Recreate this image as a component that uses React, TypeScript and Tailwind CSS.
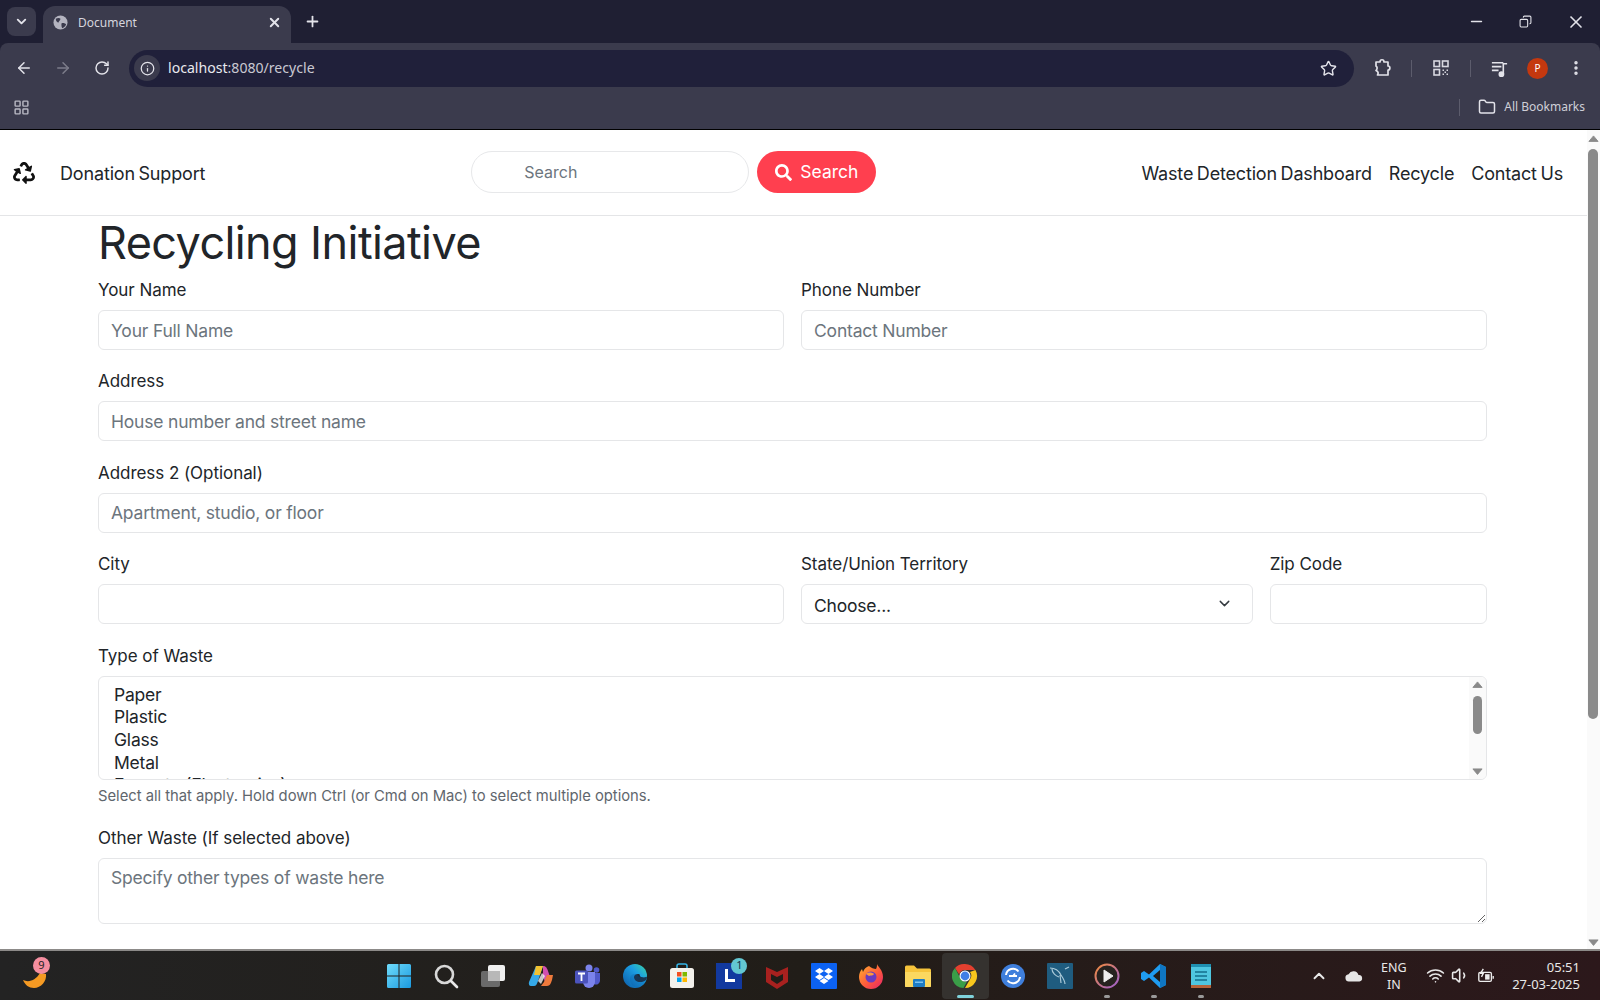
import {
  ArrowLeft,
  ArrowRight,
  ChevronDown,
  ChevronUp,
  Copy,
  EllipsisVertical,
  Folder,
  Info,
  LayoutGrid,
  Minus,
  Plus,
  RotateCw,
  Star,
  Volume1,
  Wifi,
  X,
} from "lucide-react";
import { FaRecycle, FaSearch } from "react-icons/fa";

const sans = "font-['Inter','Liberation_Sans',sans-serif]";
const inputClass =
  "h-10 w-full rounded-md border border-[#e5e6e8] bg-white px-[12px] text-[17.5px] tracking-[-0.2px] text-[#212529] outline-none placeholder:text-[#6c757d]";
const labelClass = "mb-[9px] block h-6 text-[17px] leading-[26px] tracking-[-0.05px] text-[#212529]";

const wasteTypes = ["Paper", "Plastic", "Glass", "Metal", "E-waste (Electronics)"];

function Triangle({ down, className }: { down?: boolean; className?: string }) {
  return (
    <svg viewBox="0 0 12 8" className={className} fill="#8a8a8a">
      <path d={down ? "M1 1h10L6 7z" : "M1 7h10L6 1z"} strokeLinejoin="round" stroke="#8a8a8a" />
    </svg>
  );
}

function TabGlobe() {
  return (
    <svg viewBox="0 0 16 16" className="ml-[1px] h-[15px] w-[15px]">
      <circle cx="8" cy="8" r="7.500" fill="#b4b4c0" />
      <path d="M3 4c2-1 4-1 5 0 0 2-2 2-2 4-2 0-3-2-3-4zM9 9c2-1 4 0 5 1-1 2-2 3-4 4-1-1-1-3-1-5z" fill="#3b3b4d" />
    </svg>
  );
}

function ExtensionsIcon() {
  return (
    <svg viewBox="0 0 20 20" className="ml-[19px] h-[20px] w-[20px]" fill="none" stroke="#e3e3ea" strokeWidth="1.700" strokeLinejoin="round">
      <path d="M3 4h4c0-3 4-3 4 0h4v4c2.500 0 2.500 4 0 4v5H4.500c1-1.500 1-3.500-1.500-4.500 1.500-1.500 1.500-3.500 0-4.500z" />
    </svg>
  );
}

function QrIcon() {
  return (
    <svg viewBox="0 0 18 18" className="ml-[20px] h-[18px] w-[18px]" fill="none" stroke="#d8d8e0" strokeWidth="1.600">
      <rect x="2" y="2" width="5.500" height="5.500" />
      <rect x="10.500" y="2" width="5.500" height="5.500" />
      <rect x="2" y="10.500" width="5.500" height="5.500" />
      <path d="M10.500 10.500h1.500v1.500h-1.500zM14.500 10.500H16V12h-1.500zM12.500 12.500H14V14h-1.500zM10.500 14.500H12V16h-1.500zM14.500 14.500H16V16h-1.500z" fill="#d8d8e0" stroke="none" />
    </svg>
  );
}

function MediaIcon() {
  return (
    <svg viewBox="0 0 20 20" className="ml-[19px] h-[19px] w-[19px]" fill="none" stroke="#e3e3ea" strokeWidth="1.700">
      <path d="M2 4h12M2 8h10M2 12h7" />
      <path d="M14 16V5h4" />
      <circle cx="12" cy="16" r="2.200" fill="#e3e3ea" />
    </svg>
  );
}

function BrowserChrome() {
  return (
    <div className="bg-[#1f1f33] font-['Noto_Sans',sans-serif] text-[#e3e3ea]">
      <div className="flex h-[43px] items-end">
        <div className="mb-[7px] ml-[7px] flex h-[29px] w-[29px] items-center justify-center rounded-lg bg-[#3b3b4d]">
          <ChevronDown size={15} strokeWidth={3} />
        </div>
        <div className="ml-[7px] flex h-[37px] w-[248px] items-center rounded-t-xl bg-[#3b3b4d] pb-[4px] pl-[9px]">
          <TabGlobe />
          <span className="ml-[10px] text-[12px] text-[#d5d5dd]">Document</span>
          <X size={15} strokeWidth={3} className="ml-auto mr-[9px]" />
        </div>
        <Plus size={17} strokeWidth={2.5} className="mb-[13px] ml-[13px]" />
        <Minus size={17} strokeWidth={2} className="mb-[13px] ml-auto" />
        <Copy size={13} strokeWidth={2} className="mb-[15px] ml-[34px] -scale-x-100" />
        <X size={20} strokeWidth={2} className="mb-[11px] ml-[34px] mr-[14px]" />
      </div>
      <div className="h-[86px] rounded-t-lg bg-[#3b3b4d]">
        <div className="flex h-[50px] items-center pl-[4px]">
          <div className="flex w-[39px] justify-center"><ArrowLeft size={18} /></div>
          <div className="flex w-[39px] justify-center"><ArrowRight size={18} className="text-[#7c7c8a]" /></div>
          <div className="flex w-[39px] justify-center"><RotateCw size={16} strokeWidth={2.2} /></div>
          <div className="ml-[8px] flex h-[37px] w-[1225px] items-center rounded-full bg-[#20203a] pl-[5px]">
            <div className="flex h-[26px] w-[26px] items-center justify-center rounded-full bg-[#3b3b4d]">
              <Info size={15} />
            </div>
            <span className="ml-[8px] text-[14.1px] text-[#e9e9ee]">
              localhost<span className="text-[#c9c9d2]">:8080/recycle</span>
            </span>
            <Star size={17} strokeWidth={2} className="ml-auto mr-[17px]" />
          </div>
          <ExtensionsIcon />
          <div className="ml-[18px] h-[17px] w-px bg-[#5c5c6c]" />
          <QrIcon />
          <div className="ml-[20px] h-[17px] w-px bg-[#5c5c6c]" />
          <MediaIcon />
          <div className="ml-[18px] flex h-[21px] w-[21px] items-center justify-center rounded-full bg-[#c4380f] text-[10px] text-white">
            P
          </div>
          <EllipsisVertical size={18} strokeWidth={2.6} className="ml-[19px]" />
        </div>
        <div className="flex h-[28px] items-center pl-[13px]">
          <LayoutGrid size={17} className="text-[#b9b9c4]" />
          <div className="ml-auto h-[17px] w-px bg-[#5c5c6c]" />
          <Folder size={18} className="ml-[18px]" />
          <span className="ml-[8px] mr-[15px] text-[12px] text-[#cfcfd8]">All Bookmarks</span>
        </div>
      </div>
      <div className="h-px bg-black" />
    </div>
  );
}

function Navbar() {
  return (
    <nav className="flex h-[86px] items-center border-b border-[#e4e5e7] pl-[13px] pr-[24px]">
      <FaRecycle size={22} className="text-[#111]" />
      <span className="ml-[25px] mt-[2px] text-[18px] tracking-[-0.15px] text-[#212529] [word-spacing:-1.5px]">Donation Support</span>
      <div className="ml-[266px] flex items-center gap-2">
        <input
          placeholder="Search"
          className="mb-[1px] h-[42px] w-[278px] rounded-full border border-[#e7e8ea] pl-[52px] text-[16px] outline-none placeholder:text-[#6c757d]"
        />
        <button className="mb-[1px] flex h-[42px] w-[119px] items-center justify-center gap-[8px] rounded-full bg-[#ff3f4f] pt-[1px] text-[17.5px] text-white">
          <FaSearch size={17} />
          Search
        </button>
      </div>
      <div className="ml-auto mt-[2px] flex gap-[17px] text-[18px] tracking-[-0.18px] text-[#212529] [word-spacing:-1.2px]">
        <a>Waste Detection Dashboard</a>
        <a>Recycle</a>
        <a>Contact Us</a>
      </div>
    </nav>
  );
}

function RecycleForm() {
  return (
    <div className="pl-[98px] pr-[100px]">
      <h1 className="mb-[7px] h-[54px] text-[45px] leading-[54px] tracking-[-0.6px] text-[#212529]">Recycling Initiative</h1>
      <form className="flex flex-col gap-[18.4px]">
        <div className="grid grid-cols-2 gap-x-[17px]">
          <div>
            <label className={labelClass}>Your Name</label>
            <input className={inputClass} placeholder="Your Full Name" />
          </div>
          <div>
            <label className={labelClass}>Phone Number</label>
            <input className={inputClass} placeholder="Contact Number" />
          </div>
        </div>
        <div>
          <label className={labelClass}>Address</label>
          <input className={inputClass} placeholder="House number and street name" />
        </div>
        <div>
          <label className={labelClass}>Address 2 (Optional)</label>
          <input className={inputClass} placeholder="Apartment, studio, or floor" />
        </div>
        <div className="grid grid-cols-12 gap-x-[17px]">
          <div className="col-span-6">
            <label className={labelClass}>City</label>
            <input className={inputClass} />
          </div>
          <div className="col-span-4">
            <label className={labelClass}>State/Union Territory</label>
            <div className="relative">
              <select className={`${inputClass} appearance-none pt-[3px]`}>
                <option>Choose...</option>
              </select>
              <ChevronDown size={17} strokeWidth={2} className="absolute right-[20px] top-[11px] text-[#343a40]" />
            </div>
          </div>
          <div className="col-span-2">
            <label className={labelClass}>Zip Code</label>
            <input className={inputClass} />
          </div>
        </div>
        <div>
          <label className={labelClass}>Type of Waste</label>
          <div className="flex h-[104px] overflow-hidden rounded-md border border-[#e5e6e8]">
            <div className="flex-1 pl-[15px] pt-[7px] text-[17.5px] leading-[22.7px] tracking-[-0.2px] text-[#212529]">
              {wasteTypes.map((w) => (
                <div key={w}>{w}</div>
              ))}
            </div>
            <div className="flex w-[17px] flex-col items-center bg-[#fafafa] pt-[4px]">
              <Triangle className="w-[11px]" />
              <div className="mt-[8px] h-[38px] w-[9px] rounded-full bg-[#8a8a8a]" />
              <Triangle down className="mt-[34px] w-[11px]" />
            </div>
          </div>
          <p className="mt-[4px] h-[23px] text-[14.8px] leading-[24px] tracking-[-0.02px] text-[#5f666d]">
            Select all that apply. Hold down Ctrl (or Cmd on Mac) to select multiple options.
          </p>
        </div>
        <div>
          <label className={labelClass}>Other Waste (If selected above)</label>
          <textarea
            className="block h-[66px] w-full resize-y rounded-md border border-[#e5e6e8] px-[12px] py-[6px] text-[17.5px] tracking-[-0.2px] outline-none placeholder:text-[#6c757d]"
            placeholder="Specify other types of waste here"
          />
        </div>
      </form>
    </div>
  );
}

function PageScrollbar() {
  return (
    <div className="flex w-[13px] flex-col items-center bg-[#fafafa] pt-[5px] pr-[1px]">
      <Triangle className="w-[11px]" />
      <div className="mt-[7px] h-[570px] w-[10px] rounded-full bg-[#8a8a8a]" />
      <Triangle down className="mt-auto mb-[3px] w-[11px]" />
    </div>
  );
}

function WinIcon() {
  return (
    <svg viewBox="0 0 26 26" className="h-[26px] w-[26px]">
      <defs>
        <linearGradient id="win" x1="0" y1="0" x2="1" y2="1">
          <stop offset="0" stopColor="#6fdcfb" />
          <stop offset="1" stopColor="#1b9ae0" />
        </linearGradient>
      </defs>
      <path fill="url(#win)" d="M1 2.5A1.5 1.5 0 0 1 2.5 1h10v11.500H1zM13.500 1h10A1.500 1.500 0 0 1 25 2.500V12.500H13.500zM1 13.500h11.500V25h-10A1.500 1.500 0 0 1 1 23.500zM13.500 13.500H25v10a1.500 1.500 0 0 1-1.500 1.500h-10z" />
    </svg>
  );
}

function SearchIcon() {
  return (
    <svg viewBox="0 0 26 26" className="h-[26px] w-[26px]" fill="none" stroke="#d8d8d8" strokeWidth="2.6">
      <circle cx="11.500" cy="11.500" r="8.500" />
      <path d="m18 18 6 6" strokeLinecap="round" stroke="#e9e9e9" />
    </svg>
  );
}

function TaskViewIcon() {
  return (
    <svg viewBox="0 0 26 26" className="h-[26px] w-[26px]">
      <rect x="8" y="2" width="17" height="16" rx="2" fill="#f0f0f0" />
      <rect x="1" y="8" width="19" height="16" rx="2" fill="#6a6a6a" />
      <rect x="8" y="8" width="12" height="10" fill="#b8b8b8" />
    </svg>
  );
}

function CopilotIcon() {
  return (
    <svg viewBox="0 0 26 26" className="h-[26px] w-[26px]">
      <path d="M8 3h7l-5 15c-1 3-2 5-4 5H3c-2 0-2.500-2-2-4z" fill="#35a9e8" />
      <path d="M8 3h7L12 12 6 12z" fill="#f2c230" />
      <path d="M15 3c3 0 4 2 5 5l3 9-6 2-2-6z" fill="#d14fb0" />
      <path d="M10 23h9c3 0 4-3 5-6l1-5-6 0-3 7-3 4z" fill="#ee7a3c" />
      <path d="M10 18l4-8 3 3-4 8z" fill="#ffffff" opacity=".75" />
    </svg>
  );
}

function TeamsIcon() {
  return (
    <svg viewBox="0 0 26 26" className="h-[26px] w-[26px]">
      <circle cx="14" cy="5" r="3.500" fill="#7b83eb" />
      <circle cx="21.500" cy="7" r="2.800" fill="#5059c9" />
      <path d="M17 10h8v8a4 4 0 0 1-6 3z" fill="#5059c9" />
      <path d="M8 9h12v10a6 6 0 0 1-12 0z" fill="#7b83eb" />
      <rect x="0" y="7.500" width="13" height="13" rx="1.500" fill="#4b53bc" />
      <path d="M3 10.500h7M6.500 10.500v7.500" stroke="#fff" strokeWidth="1.800" />
    </svg>
  );
}

function EdgeIcon() {
  return (
    <svg viewBox="0 0 26 26" className="h-[26px] w-[26px]">
      <defs>
        <linearGradient id="edge" x1="0" y1="1" x2="1" y2="0">
          <stop offset="0" stopColor="#0c59a4" />
          <stop offset=".6" stopColor="#1b9de2" />
          <stop offset="1" stopColor="#3bd6a0" />
        </linearGradient>
      </defs>
      <circle cx="13" cy="13" r="12" fill="url(#edge)" />
      <path d="M25 14c0 3-3 5-7 5-3 0-6-2-6-5 0-2 2-3 4-3 3 0 1 2 3 3 3 1 6 0 6 0z" fill="#1c2b3a" />
      <path d="M25 13c-1 1-4 2-7 1-2 0-2-3-5-3-3 0-5 2-5 5 0 4 3 8 7 9 5-1 10-6 10-12z" fill="#0c59a4" opacity=".25" />
    </svg>
  );
}

function StoreIcon() {
  return (
    <svg viewBox="0 0 26 26" className="h-[26px] w-[26px]">
      <path d="M8 6V3a2 2 0 0 1 2-2h6a2 2 0 0 1 2 2v3" fill="none" stroke="#35b5e8" strokeWidth="1.500" />
      <rect x="1" y="5" width="24" height="20" rx="2.500" fill="#f3f1ec" />
      <rect x="8" y="9" width="4.500" height="4.500" fill="#f25022" />
      <rect x="13.500" y="9" width="4.500" height="4.500" fill="#7fba00" />
      <rect x="8" y="14.500" width="4.500" height="4.500" fill="#00a4ef" />
      <rect x="13.500" y="14.500" width="4.500" height="4.500" fill="#ffb900" />
    </svg>
  );
}

function LIcon() {
  return (
    <div className="relative">
      <svg viewBox="0 0 26 26" className="h-[26px] w-[26px]">
        <rect width="26" height="26" fill="#12399f" />
        <path d="M9 6v13h10v-3h-7V6z" fill="#fff" />
      </svg>
      <span className="absolute -right-[5px] -top-[5px] flex h-4 w-4 items-center justify-center rounded-full bg-[#63c7d2] text-[11px] text-[#16324a]">
        1
      </span>
    </div>
  );
}

function McAfeeIcon() {
  return (
    <svg viewBox="0 0 26 26" className="h-[26px] w-[26px]">
      <path d="M2 4l11 5 11-5v15l-11 7-11-7z" fill="#a8211f" />
      <path d="M7 11l6 3 6-3v6l-6 4-6-4z" fill="#211d18" />
    </svg>
  );
}

function DropboxIcon() {
  return (
    <svg viewBox="0 0 26 26" className="h-[26px] w-[26px]">
      <rect width="26" height="26" rx="1" fill="#0c62f2" />
      <path d="M8.500 5 13 8l-4.500 3L4 8zM17.500 5 22 8l-4.500 3L13 8zM8.500 11l4.500 3-4.500 3L4 14zM17.500 11l4.500 3-4.500 3L13 14zM8.500 18l4.500-3 4.500 3-4.500 3z" fill="#fff" />
    </svg>
  );
}

function FirefoxIcon() {
  return (
    <svg viewBox="0 0 26 26" className="h-[26px] w-[26px]">
      <defs>
        <linearGradient id="fx" x1="0" y1="0" x2="1" y2="1">
          <stop offset="0" stopColor="#ffb52e" />
          <stop offset=".55" stopColor="#ff5a3c" />
          <stop offset="1" stopColor="#e3226b" />
        </linearGradient>
      </defs>
      <path d="M19 1c1 3 6 6 6 13a12 12 0 0 1-24 0c0-3 1-6 3-8l1 3c1-3 3-5 6-6 2 2 5 3 7 3 1-2 1-3 1-5z" fill="url(#fx)" />
      <circle cx="13" cy="14" r="5.500" fill="#6a3bc0" />
      <path d="M8 11c2-2 6-2 8 0-1 2-3 1-5 2z" fill="#ff9a3c" />
    </svg>
  );
}

function FolderIcon() {
  return (
    <svg viewBox="0 0 26 26" className="h-[26px] w-[26px]">
      <path d="M0 4a1.500 1.500 0 0 1 1.500-1.500H9l3 3h12.500A1.500 1.500 0 0 1 26 7v16a1 1 0 0 1-1 1H1a1 1 0 0 1-1-1z" fill="#f6c43b" />
      <path d="M0 9h26v14a1 1 0 0 1-1 1H1a1 1 0 0 1-1-1z" fill="#fbd860" />
      <rect x="8" y="16" width="12" height="8" rx="1" fill="#1d7cc4" />
      <rect x="10" y="18.500" width="8" height="1.500" fill="#7ec3ee" />
    </svg>
  );
}

function ChromeIcon() {
  return (
    <svg viewBox="0 0 26 26" className="h-[26px] w-[26px]">
      <path d="M13 1a12 12 0 0 1 10.400 6H13a6 6 0 0 0-5.800 4.500L3 5A12 12 0 0 1 13 1z" fill="#e3402f" />
      <path d="M23.400 7A12 12 0 0 1 13 25l5.200-9A6 6 0 0 0 18 9z" fill="#f8c71d" />
      <path d="M3 5l5.200 10A6 6 0 0 0 15 18.600L11.500 25A12 12 0 0 1 3 5z" fill="#3a9e48" />
      <circle cx="13" cy="13" r="5.500" fill="#fff" />
      <circle cx="13" cy="13" r="4.400" fill="#3f7fe6" />
    </svg>
  );
}

function SyncIcon() {
  return (
    <svg viewBox="0 0 26 26" className="h-[26px] w-[26px]">
      <circle cx="13" cy="13" r="12" fill="#3f7fdc" />
      <path d="M6 12a7 7 0 0 1 12.500-3.500M20 14a7 7 0 0 1-12.500 3.500" fill="none" stroke="#fff" strokeWidth="2" />
      <path d="M9 13h4l2-2.500M17 13h-4" fill="none" stroke="#fff" strokeWidth="1.800" />
    </svg>
  );
}

function MysqlIcon() {
  return (
    <svg viewBox="0 0 26 26" className="h-[26px] w-[26px]">
      <rect width="26" height="26" rx="1" fill="#1f5c7f" />
      <path d="M3 5c5 0 9 3 11 7 2 3 4 6 4 9M5 6c0 4 4 7 7 8M13 12l1 8M18 6l4-2" fill="none" stroke="#a9c9d8" strokeWidth="1.200" />
    </svg>
  );
}

function PlayerIcon() {
  return (
    <svg viewBox="0 0 26 26" className="h-[26px] w-[26px]">
      <defs>
        <linearGradient id="pl" x1="0" y1="0" x2="1" y2="1">
          <stop offset="0" stopColor="#f08a3c" />
          <stop offset="1" stopColor="#9c5fd0" />
        </linearGradient>
      </defs>
      <circle cx="13" cy="13" r="11.500" fill="#26221f" stroke="url(#pl)" strokeWidth="2" />
      <path d="M10 7l9 6-9 6z" fill="#eee" strokeLinejoin="round" stroke="#eee" />
    </svg>
  );
}

function VscodeIcon() {
  return (
    <svg viewBox="0 0 26 26" className="h-[26px] w-[26px]">
      <path d="M19 1l6 3v18l-6 3-11-10.500L3 18l-3-2V10l3-2 5 3.500z" fill="#1f9cf0" />
      <path d="M19 7l-7 6 7 6z" fill="#211d18" />
      <path d="M19 1l6 3v18l-6 3z" fill="#0f76c2" />
    </svg>
  );
}

function NotepadIcon() {
  return (
    <svg viewBox="0 0 26 26" className="h-[26px] w-[26px]">
      <rect x="3" y="1" width="20" height="24" rx="2" fill="#4fc6e0" />
      <rect x="3" y="22" width="20" height="3" fill="#b5643a" />
      <rect x="3" y="1" width="20" height="3" fill="#1f8fb0" />
      <path d="M7 9h12M7 13h12M7 17h12" stroke="#156f8c" strokeWidth="1.500" />
    </svg>
  );
}

const taskbarIcons = [
  { id: "start", el: <WinIcon /> },
  { id: "search", el: <SearchIcon /> },
  { id: "taskview", el: <TaskViewIcon /> },
  { id: "copilot", el: <CopilotIcon /> },
  { id: "teams", el: <TeamsIcon /> },
  { id: "edge", el: <EdgeIcon /> },
  { id: "store", el: <StoreIcon /> },
  { id: "l", el: <LIcon /> },
  { id: "mcafee", el: <McAfeeIcon /> },
  { id: "dropbox", el: <DropboxIcon /> },
  { id: "firefox", el: <FirefoxIcon /> },
  { id: "folder", el: <FolderIcon /> },
  { id: "chrome", el: <ChromeIcon />, active: true },
  { id: "sync", el: <SyncIcon /> },
  { id: "mysql", el: <MysqlIcon /> },
  { id: "player", el: <PlayerIcon />, dot: true },
  { id: "vscode", el: <VscodeIcon />, dot: true },
  { id: "notepad", el: <NotepadIcon />, dot: true },
];

function Taskbar() {
  return (
    <div className="flex h-[51px] items-center border-t-2 border-[#8c8a88] bg-gradient-to-r from-[#232323] via-[#211d18] to-[#2c181b] font-['Noto_Sans',sans-serif] text-[#e8e8e8]">
      <div className="relative ml-[22px] w-[26px]">
        <svg viewBox="0 0 26 16" className="mt-[10px] h-[16px] w-[26px]">
          <path d="M1 7c6 3 13 0 17-7l6 1c1 7-5 14-12 14C7 15 3 12 1 7z" fill="#f59a23" />
        </svg>
        <span className="absolute -top-[6px] left-[11px] flex h-[17px] w-[17px] items-center justify-center rounded-full bg-[#f58ea0] text-[11px] text-[#222]">
          9
        </span>
      </div>
      <div className="ml-[327.5px] flex">
        {taskbarIcons.map((icon) => (
          <div
            key={icon.id}
            className={`relative flex h-[46px] w-[47.2px] items-center justify-center rounded ${icon.active ? "bg-[#35322f]" : ""}`}
          >
            {icon.el}
            {icon.active && <span className="absolute bottom-[1px] h-[3px] w-[17px] rounded-full bg-[#7fd3dc]" />}
            {icon.dot && <span className="absolute bottom-[1px] h-[3px] w-[6px] rounded-full bg-[#9a9a9a]" />}
          </div>
        ))}
      </div>
      <ChevronUp size={18} strokeWidth={2.5} className="ml-[85px]" />
      <svg viewBox="0 0 20 12" className="ml-[17px] h-[12px] w-[18px]">
        <path d="M5 12a4 4 0 0 1-1-8 6 6 0 0 1 11 1 3.500 3.500 0 0 1 1 7z" fill="#e6e6e6" />
      </svg>
      <div className="ml-[17px] w-[28px] text-center text-[12.500px] leading-[17px]">
        ENG
        <br />
        IN
      </div>
      <Wifi size={19} className="ml-[18px]" />
      <Volume1 size={19} className="ml-[6px]" />
      <svg viewBox="0 0 20 16" className="ml-[7px] h-[16px] w-[18px]" fill="none" stroke="#eee" strokeWidth="1.500">
        <rect x="2" y="4" width="14" height="10" rx="1.500" />
        <rect x="9" y="6" width="5" height="6" fill="#eee" stroke="none" />
        <path d="M18 8v3" />
        <path d="M7 0 4 5h3l-2 4" />
      </svg>
      <div className="ml-auto mr-[20px] text-right text-[13px] leading-[17px]">
        05:51
        <br />
        27-03-2025
      </div>
    </div>
  );
}

export default function App() {
  return (
    <div className={`flex h-screen flex-col overflow-hidden bg-white ${sans}`}>
      <BrowserChrome />
      <div className="flex min-h-0 flex-1">
        <main className="min-w-0 flex-1 overflow-hidden">
          <Navbar />
          <RecycleForm />
        </main>
        <PageScrollbar />
      </div>
      <Taskbar />
    </div>
  );
}
